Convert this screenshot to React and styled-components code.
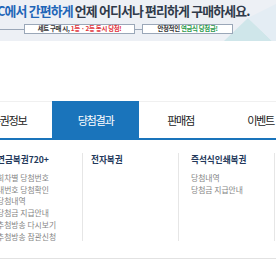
import styled, { createGlobalStyle } from "styled-components";

const GlobalStyle = createGlobalStyle`
  body {
    margin: 0;
    background: #ffffff;
    font-family: "Noto Sans CJK KR", "Noto Sans", sans-serif;
  }
`;

const Page = styled.div`
  width: 276px;
  height: 260px;
  overflow: hidden;
  position: relative;
`;

const Banner = styled.div`
  position: relative;
  height: 41px;
  background: #edf0f5;
  overflow: hidden;
`;

const Deco = styled.svg`
  position: absolute;
  right: 0;
  top: 0;
`;

const Headline = styled.div`
  position: relative;
  margin-left: -3px;
  padding-top: 2px;
  font-size: 12.9px;
  font-weight: 700;
  letter-spacing: -0.85px;
  line-height: 18px;
  white-space: nowrap;
  color: #2f3a4a;
`;

const Blue = styled.span`
  color: #1f66b8;
`;

const TagRow = styled.div`
  position: relative;
  display: flex;
  align-items: center;
  margin-top: 4px;
`;

const Line = styled.div`
  height: 1px;
  width: ${(p) => p.w}px;
  background: #9aa7b8;
`;

const Tag = styled.div`
  width: ${(p) => p.w}px;
  height: 10px;
  box-sizing: border-box;
  border: 1px solid #9aa7b8;
  background: #ffffff;
  font-size: 6.4px;
  font-weight: 700;
  line-height: 8px;
  text-align: center;
  letter-spacing: -0.3px;
  color: #333;
  white-space: nowrap;
`;

const Hl = styled.span`
  color: ${(p) => p.c};
`;

const Gap = styled.div`
  height: 60px;
`;

const Nav = styled.nav`
  display: flex;
  height: 36px;
  border-top: 1px solid #f0f0f0;
  border-bottom: 2px solid #1a74bb;
  margin-left: -35px;
`;

const NavItem = styled.div`
  flex: 0 0 ${(p) => p.w}px;
  display: flex;
  align-items: center;
  justify-content: center;
  font-size: 11.2px;
  letter-spacing: -1.4px;
  color: ${(p) => (p.active ? "#ffffff" : "#222")};
  background: ${(p) => (p.active ? "#1a74bb" : "transparent")};
  margin-top: ${(p) => (p.active ? "-1px" : "0")};
`;

const Drop = styled.div`
  display: flex;
  margin-left: -13px;
  padding: 13px 0 17px;
  border-bottom: 1px solid #e2e2e2;
`;

const Col = styled.div`
  flex: 0 0 96px;
  height: 88px;
  box-sizing: border-box;
  padding-left: ${(p) => p.pad}px;
  border-right: 1px solid #e6e6e6;
`;

const ColTitle = styled.div`
  font-size: 8.6px;
  font-weight: 700;
  line-height: 12px;
  color: #22385a;
  margin-bottom: 7px;
  white-space: nowrap;
`;

const ColItem = styled.div`
  font-size: 7.8px;
  line-height: 11.7px;
  color: #858585;
  white-space: nowrap;
`;

const tabs = [
  { label: "복권정보", w: 87 },
  { label: "당첨결과", w: 87, active: true },
  { label: "판매점", w: 83 },
  { label: "이벤트", w: 77 },
];

const columns = [
  {
    title: "연금복권720+",
    pad: 10,
    items: [
      "회차별 당첨번호",
      "내번호 당첨확인",
      "당첨내역",
      "당첨금 지급안내",
      "추첨방송 다시보기",
      "추첨방송 참관신청",
    ],
  },
  { title: "전자복권", pad: 8, items: [] },
  { title: "즉석식인쇄복권", pad: 12, items: ["당첨내역", "당첨금 지급안내"] },
];

export default function App() {
  return (
    <Page>
      <GlobalStyle />
      <Banner>
        <Deco width="60" height="41" viewBox="0 0 60 41">
          <polygon points="8,41 32,18 56,41" fill="#cfe6ea" />
          <polygon points="32,18 60,4 60,41 56,41" fill="#e4edf4" />
        </Deco>
        <Headline>
          <Blue>C에서 간편하게</Blue> 언제 어디서나 편리하게 구매하세요.
        </Headline>
        <TagRow>
          <Line w={24} />
          <Tag w={111}>
            세트 구매 시, <Hl c="#e2343c">1등 · 2등 동시 당첨!</Hl>
          </Tag>
          <Line w={7} />
          <Tag w={91}>
            안정적인 <Hl c="#2b9a4b">연금식 당첨금!</Hl>
          </Tag>
        </TagRow>
      </Banner>
      <Gap />
      <Nav>
        {tabs.map((t) => (
          <NavItem key={t.label} w={t.w} active={t.active}>
            {t.label}
          </NavItem>
        ))}
      </Nav>
      <Drop>
        {columns.map((c) => (
          <Col key={c.title} pad={c.pad}>
            <ColTitle>{c.title}</ColTitle>
            {c.items.map((i) => (
              <ColItem key={i}>{i}</ColItem>
            ))}
          </Col>
        ))}
      </Drop>
    </Page>
  );
}
